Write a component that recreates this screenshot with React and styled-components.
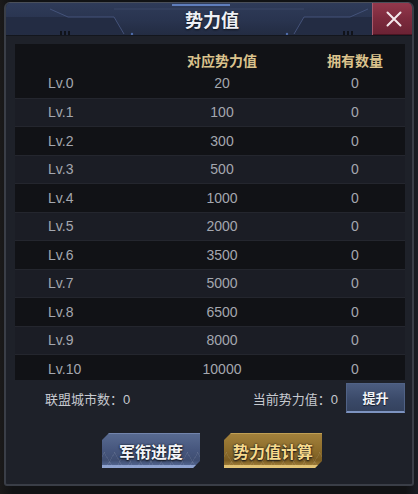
import React from 'react';
import styled, { createGlobalStyle } from 'styled-components';

const GlobalStyle = createGlobalStyle`
  html, body {
    margin: 0;
    padding: 0;
    background: #131418;
  }
  body {
    font-family: "Liberation Sans", "Noto Sans CJK SC", sans-serif;
  }
`;

const levels = [
  [0, 20], [1, 100], [2, 300], [3, 500], [4, 1000], [5, 2000],
  [6, 3500], [7, 5000], [8, 6500], [9, 8000], [10, 10000],
];

const HeaderDecor = () => (
  <DecorSvg viewBox="0 0 406 32" preserveAspectRatio="none">
    <path d="M0 14 L62 14 L108 14 L118 31 L0 31 Z" fill="#232c43" />
    <path d="M406 14 L344 14 L298 14 L288 31 L406 31 Z" fill="#232c43" />
    <path d="M44 6 L62 14 L108 14 L118 31" stroke="#44537a" strokeWidth="1" fill="none" />
    <path d="M362 6 L344 14 L298 14 L288 31" stroke="#44537a" strokeWidth="1" fill="none" />
    <path d="M108 6 L298 6" stroke="#3a4766" strokeWidth="1" />
    <rect x="166" y="1" width="58" height="2" fill="#6b8fd6" opacity="0.8" />
    <rect x="54" y="28" width="2" height="4" fill="#10131a" />
    <rect x="58" y="28" width="2" height="4" fill="#10131a" />
    <rect x="62" y="28" width="2" height="4" fill="#10131a" />
    <rect x="337" y="28" width="2" height="4" fill="#10131a" />
    <rect x="341" y="28" width="2" height="4" fill="#10131a" />
    <rect x="345" y="28" width="2" height="4" fill="#10131a" />
    <circle cx="126" cy="31" r="1.2" fill="#4f6cab" />
    <circle cx="281" cy="31" r="1.2" fill="#4f6cab" />
  </DecorSvg>
);

const App = () => {
  return (
    <Screen>
      <GlobalStyle />
      <Panel>
        <Header>
          <HeaderDecor />
          <Title>势力值</Title>
          <CloseButton aria-label="close">
            <svg width="16" height="16" viewBox="0 0 16 16">
              <path d="M1.5 1.5 L14.5 14.5 M14.5 1.5 L1.5 14.5" stroke="#f4e8ec" strokeWidth="2" strokeLinecap="round" />
            </svg>
          </CloseButton>
        </Header>

        <Body>
          <Table>
            <HeadRow>
              <span />
              <HeadCell>对应势力值</HeadCell>
              <HeadCell $pad>拥有数量</HeadCell>
            </HeadRow>
            {levels.map(([lv, value], index) => (
              <Row key={lv} $alt={index % 2 === 1} $first={index === 0}>
                <LvCell>Lv.{lv}</LvCell>
                <NumCell>{value}</NumCell>
                <NumCell $pad>0</NumCell>
              </Row>
            ))}
          </Table>

          <InfoRow>
            <span>联盟城市数：0</span>
            <Spacer />
            <span>当前势力值：0</span>
            <UpButton>提升</UpButton>
          </InfoRow>

          <ActionRow>
            <ActionButton $variant="blue">军衔进度</ActionButton>
            <ActionButton $variant="gold">势力值计算</ActionButton>
          </ActionRow>
        </Body>
      </Panel>
    </Screen>
  );
};

export default App;

const Screen = styled.div`
  width: 418px;
  height: 494px;
  box-sizing: border-box;
  padding: 2px 4px 0;
  background: linear-gradient(90deg, #1b1a1a 0%, #111214 3%, #111214 97%, #1a1d24 100%);
  overflow: hidden;
`;

const Panel = styled.div`
  height: 484px;
  box-sizing: border-box;
  display: flex;
  flex-direction: column;
  background: #1e2129;
  border: 2px solid #3a3e47;
  border-top: 1px solid #4a4f5a;
  border-radius: 6px 6px 3px 3px;
  overflow: hidden;
`;

const Header = styled.div`
  position: relative;
  height: 32px;
  flex-shrink: 0;
  display: grid;
  grid-template-columns: 40px 1fr 40px;
  background: linear-gradient(180deg, #2f3b59 0%, #29344f 55%, #232c42 100%);
  border-bottom: 1px solid #13161d;
`;

const DecorSvg = styled.svg`
  position: absolute;
  inset: 0;
  width: 100%;
  height: 100%;
  pointer-events: none;
`;

const Title = styled.div`
  position: relative;
  grid-column: 2;
  text-align: center;
  line-height: 32px;
  font-size: 18px;
  font-weight: bold;
  font-family: "Noto Sans CJK SC", sans-serif;
  color: #eef0f5;
  text-shadow: 0 1px 2px #0a0d14;
  padding-left: 6px;
`;

const CloseButton = styled.button`
  position: relative;
  grid-column: 3;
  display: flex;
  align-items: center;
  justify-content: center;
  padding: 0;
  margin: 0 -2px 0 0;
  border: none;
  border-left: 1px solid #a75a6c;
  border-radius: 0 5px 0 0;
  background: linear-gradient(180deg, #93384c 0%, #7c2a3d 50%, #6a2234 100%);
  box-shadow: inset 0 -1px 0 #4a1522;
`;

const Body = styled.div`
  flex: 1;
  display: flex;
  flex-direction: column;
  padding: 8px 7px 0 9px;
`;

const Table = styled.div`
  height: 336px;
  flex-shrink: 0;
  background: #111216;
  overflow: hidden;
`;

const HeadRow = styled.div`
  display: grid;
  grid-template-columns: 140px 134px 1fr;
  height: 25px;
  align-items: end;
`;

const HeadCell = styled.div`
  text-align: center;
  padding-left: ${p => (p.$pad ? '16px' : '0')};
  font-family: "Noto Sans CJK SC", sans-serif;
  font-size: 14px;
  font-weight: bold;
  line-height: 18px;
  color: #dbc38d;
`;

const Row = styled.div`
  display: grid;
  grid-template-columns: 140px 134px 1fr;
  height: 28.5px;
  box-sizing: border-box;
  align-items: center;
  background: ${p => (p.$alt ? '#1b1d25' : 'transparent')};
  border-top: ${p => (p.$first ? 'none' : '1px solid #24262e')};
  font-size: 14px;
  color: #a4a7af;
`;

const LvCell = styled.div`
  padding-left: 33px;
`;

const NumCell = styled.div`
  text-align: center;
  padding-left: ${p => (p.$pad ? '16px' : '0')};
`;

const InfoRow = styled.div`
  display: flex;
  align-items: center;
  height: 30px;
  margin-top: 3px;
  padding-left: 30px;
  font-size: 13px;
  color: #c6c9cf;
`;

const Spacer = styled.div`
  flex: 1;
`;

const UpButton = styled.button`
  width: 59px;
  height: 30px;
  margin-left: 8px;
  padding: 0;
  box-sizing: border-box;
  border: 1px solid #506286;
  border-bottom: 2px solid #7d93c0;
  background: linear-gradient(180deg, #4b5c7f 0%, #3a4968 60%, #34425e 100%);
  color: #f2f4f8;
  font-family: "Noto Sans CJK SC", sans-serif;
  font-size: 13px;
  font-weight: bold;
  text-shadow: 0 1px 1px #141a26;
`;

const variants = {
  blue: {
    base: 'linear-gradient(180deg, #596b91 0%, #46567d 50%, #3f4e72 78%, #5d72a0 100%)',
    color: '#f3f5f9',
    edge: 'rgba(160, 180, 225, 0.75)',
    top: 'rgba(140, 158, 200, 0.5)',
  },
  gold: {
    base: 'linear-gradient(180deg, #a4823c 0%, #8c6c2b 50%, #7a5c22 78%, #b08d43 100%)',
    color: '#f7da8c',
    edge: 'rgba(240, 210, 130, 0.8)',
    top: 'rgba(220, 190, 110, 0.5)',
  },
};

const ActionRow = styled.div`
  display: flex;
  justify-content: center;
  gap: 24px;
  margin-top: 20px;
  padding-left: 4px;
`;

const ActionButton = styled.button`
  width: 98px;
  height: 35px;
  padding: 0;
  border: none;
  clip-path: polygon(7px 0, 100% 0, 100% calc(100% - 7px), calc(100% - 7px) 100%, 0 100%, 0 7px);
  background:
    repeating-linear-gradient(60deg, rgba(255, 255, 255, 0.07) 0 1px, transparent 1px 9px) bottom / 100% 45% no-repeat,
    repeating-linear-gradient(-60deg, rgba(255, 255, 255, 0.07) 0 1px, transparent 1px 9px) bottom / 100% 45% no-repeat,
    ${p => variants[p.$variant].base};
  box-shadow: inset 0 -3px 0 ${p => variants[p.$variant].edge}, inset 0 1px 0 ${p => variants[p.$variant].top};
  color: ${p => variants[p.$variant].color};
  font-family: "Noto Sans CJK SC", sans-serif;
  font-size: 16px;
  font-weight: bold;
  text-shadow: 0 1px 2px #10131a, 0 0 2px #10131a;
`;
